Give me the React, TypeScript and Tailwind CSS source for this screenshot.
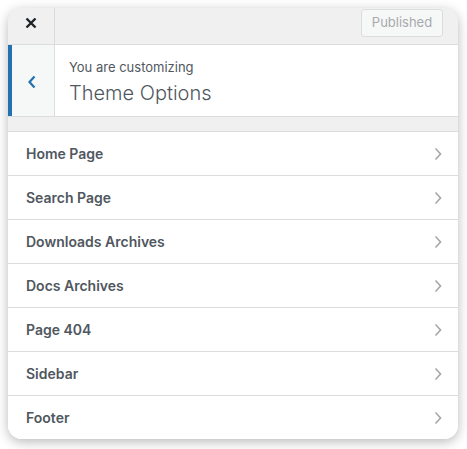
import React from "react";

const items = [
  "Home Page",
  "Search Page",
  "Downloads Archives",
  "Docs Archives",
  "Page 404",
  "Sidebar",
  "Footer",
];

function Chevron({ dir, color }: { dir: "left" | "right"; color: string }) {
  return (
    <svg width="10" height="14" viewBox="0 0 10 14" fill="none">
      {dir === "left" ? (
        <path d="M7.5 1.5 L2.5 7 L7.5 12.5" stroke={color} strokeWidth="2.2" strokeLinecap="butt" strokeLinejoin="miter" />
      ) : (
        <path d="M2.5 1.5 L7.5 7 L2.5 12.5" stroke={color} strokeWidth="1.7" strokeLinecap="butt" strokeLinejoin="miter" />
      )}
    </svg>
  );
}

export default function App() {
  return (
    <div
      className="w-[467px] h-[449px] bg-white pt-2 pl-2"
      style={{ fontFamily: "Inter, 'Noto Sans', 'Liberation Sans', sans-serif" }}
    >
      <div className="w-[450px] h-[431px] rounded-[14px] overflow-hidden bg-[#f0f0f1] shadow-[0_3px_12px_rgba(0,0,0,0.28)] flex flex-col">
        {/* Top bar */}
        <div className="h-[37px] flex border-b border-[#dcdcde] bg-[#f0f0f1] shrink-0">
          <div className="w-[47px] border-r border-[#dcdcde] flex items-start justify-center pt-[9px]">
            <svg width="12" height="12" viewBox="0 0 12 12">
              <path d="M1.5 1.5 L10.5 10.5 M10.5 1.5 L1.5 10.5" stroke="#1d2327" strokeWidth="2.4" />
            </svg>
          </div>
          <div className="flex-1 flex justify-end pr-[15px] pt-px">
            <div className="h-[28px] w-[82px] rounded-[3px] border border-[#dcdcde] bg-[#f6f7f7] text-[#a7aaad] text-[13px] flex items-center justify-center">
              Published
            </div>
          </div>
        </div>
        {/* Section header */}
        <div className="h-[72px] flex bg-white border-b border-[#dcdcde] shrink-0">
          <div className="w-[47px] border-l-4 border-l-[#2271b1] border-r border-r-[#dcdcde] bg-[#f6f7f7] flex items-center justify-center pr-[3px] pt-[2px]">
            <Chevron dir="left" color="#2271b1" />
          </div>
          <div className="pl-[14px] flex flex-col justify-center text-[#50575e]">
            <div className="text-[13px] leading-[18px] mt-[2px]">You are customizing</div>
            <div className="text-[20px] leading-[26px] font-light mt-[4px]">Theme Options</div>
          </div>
        </div>
        {/* gray band */}
        <div className="h-[15px] bg-[#f0f0f1] border-b border-[#dcdcde] shrink-0" />
        {/* Items */}
        <div className="flex flex-col bg-white flex-1">
          {items.map((label) => (
            <div
              key={label}
              className="h-[44px] shrink-0 flex items-center justify-between pl-[18px] pr-[15px] border-b border-[#dcdcde] bg-white"
            >
              <span className="text-[14px] font-semibold text-[#50575e]">{label}</span>
              <Chevron dir="right" color="#a7aaad" />
            </div>
          ))}
        </div>
      </div>
    </div>
  );
}
